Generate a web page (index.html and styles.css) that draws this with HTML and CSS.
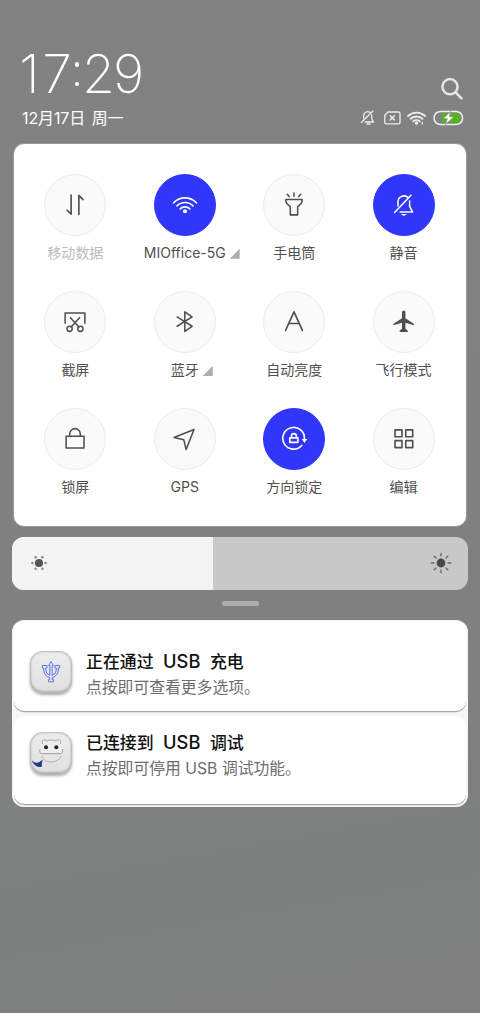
FILE: index.html
```html
<!DOCTYPE html>
<html lang="zh-CN">
<head>
<meta charset="utf-8">
<title>控制中心</title>
<link rel="stylesheet" href="styles.css">
</head>
<body>
<div class="shade">
  <header class="header">
    <div class="left">
      <div class="clock"><span class="n1">1</span><span class="n7">7</span><span class="colon"><i></i><i></i></span><span class="n2">2</span><span class="n9">9</span></div>
      <div class="date">12月17日 周一</div>
    </div>
    <div class="right">
      <svg class="search" width="24" height="24" viewBox="0 0 24 24"><circle cx="10" cy="9.7" r="7.6"/><path d="M15.5 15.3L21.5 21.3"/></svg>
      <svg class="status" width="106" height="18" viewBox="0 0 106 18">
        <g class="line">
          <path d="M2.5 13.2L14 2M4.6 9V7.2A4.2 4.2 0 0 1 11.2 3.4M12.8 6V10L14.6 13H6.2"/>
          <path d="M8 15H11"/>
          <path d="M29 3H39.4Q41 3 41 4.6V13.4Q41 14.8 39.4 14.8H27.2Q25.8 14.8 25.8 13.4V6.2Z"/>
          <path d="M31.2 6.8L35.4 11M35.4 6.8L31.2 11" stroke-width="1.6"/>
          <path d="M49 7A12.5 12.5 0 0 1 66 7M51.6 9.8A8.6 8.6 0 0 1 63.4 9.8M54.3 12.3A4.8 4.8 0 0 1 60.7 12.3" stroke-width="1.9"/>
        </g>
        <circle cx="57.5" cy="14" r="1.7" fill="#eee"/>
        <path d="M62 14.3L64 12.5V16Z" fill="#ddd"/>
        <rect x="75" y="2.5" width="28.6" height="13" rx="6.5" class="batt"/>
        <path d="M83 4.5H97A4.5 4.5 0 0 1 97 13.5H83Z" fill="#4fb812"/>
        <path d="M91.5 2.5L84 9.8H88.3L86.5 15.5L95 7.8H90.6Z" fill="#fff" stroke="#7d817b" stroke-width=".7"/>
      </svg>
    </div>
  </header>

  <main class="panel">
    <div class="tile off"><svg class="ico" viewBox="0 0 62 62"><path d="M27 20.7V40.5L22.8 36.4M35 40.7V21L39.2 25.4" stroke-width="1.7"/></svg><span class="label">移动数据</span></div>
    <div class="tile on"><svg class="ico" viewBox="0 0 62 62"><path d="M19.3 28.7A16 16 0 0 1 42.7 28.7M22.7 31.9A11.7 11.7 0 0 1 39.3 31.9M26 35A7 7 0 0 1 36 35" stroke-width="1.7"/><circle cx="31" cy="37.4" r="2.1" class="fill"/></svg><span class="label">MIOffice-5G<b class="corner"></b></span></div>
    <div class="tile"><svg class="ico" viewBox="0 0 62 62"><path d="M22.6 25.3H39.4V26.7C39.4 29.6 37 31.2 34.8 32.6V41.2H27.2V32.6C25 31.2 22.6 29.6 22.6 26.7ZM31 18.6V22M24 20L26 22.3M38 20L36 22.3"/></svg><span class="label">手电筒</span></div>
    <div class="tile on"><svg class="ico" viewBox="0 0 62 62"><path d="M38.2 21L21.3 38.8M24.8 32V28A6.2 6.2 0 0 1 34.6 22.8M36.8 26.8V32.5L39.9 38.3H27"/><path d="M28 40.3H33.8Q32.6 42 30.9 42T28 40.3Z" class="fill"/></svg><span class="label">静音</span></div>

    <div class="tile"><svg class="ico" viewBox="0 0 62 62"><path d="M20.8 32.2V21.8H41.2V32.2M26.3 26.5L35 36.1M35.7 26.5L27 36.1"/><circle cx="25.4" cy="38" r="2.7"/><circle cx="36.6" cy="38" r="2.7"/></svg><span class="label">截屏</span></div>
    <div class="tile"><svg class="ico" viewBox="0 0 62 62"><path d="M22.9 25.8L38.3 35.4L30.8 40.7V20.5L38.3 25.8L22.9 35.4"/></svg><span class="label">蓝牙<b class="corner"></b></span></div>
    <div class="tile"><svg class="ico" viewBox="0 0 62 62"><path d="M22.3 39.7L31 20.5L39.7 39.7M25.5 32.5H36.5" stroke-width="1.7"/></svg><span class="label">自动亮度</span></div>
    <div class="tile"><svg class="ico" viewBox="0 0 62 62"><path class="fill" d="M28.9 21Q28.9 19 30.7 19T32.5 21V27L41.2 32.7V34.3L32.5 31.7V38L34.9 40V41.3H26.5V40L28.9 38V31.7L20.2 34.3V32.7L28.9 27Z"/></svg><span class="label">飞行模式</span></div>

    <div class="tile"><svg class="ico" viewBox="0 0 62 62"><path d="M21.8 28.2H40.3V40.3H21.8ZM25.5 28V25.8A5.5 5.5 0 0 1 36.5 25.8V28"/></svg><span class="label">锁屏</span></div>
    <div class="tile"><svg class="ico" viewBox="0 0 62 62"><path d="M40.3 21.2L19.6 29.4L29.7 31.7L32.2 41.8Z"/></svg><span class="label">GPS</span></div>
    <div class="tile on"><svg class="ico" viewBox="0 0 62 62"><path d="M39 37.7A11.2 11.2 0 1 1 41.8 31M26.7 29.8H35V34.5H26.7ZM28.4 29.6V28A2.5 2.5 0 0 1 33.4 28V29.6" stroke-width="1.7"/><path class="fill" d="M39 31H44.6L41.8 35.2Z"/></svg><span class="label">方向锁定</span></div>
    <div class="tile"><svg class="ico" viewBox="0 0 62 62"><path d="M21.7 21.5H28.9V28.7H21.7ZM32.8 21.5H40V28.7H32.8ZM21.7 32.7H28.9V39.9H21.7ZM32.8 32.7H40V39.9H32.8Z" stroke-width="1.7"/></svg><span class="label">编辑</span></div>
  </main>

  <div class="slider">
    <div class="level"><svg width="18" height="18" viewBox="0 0 18 18" fill="#858585"><circle cx="9" cy="9" r="4.1" fill="#555"/><circle cx="2.4" cy="9" r="1.2"/><circle cx="15.6" cy="9" r="1.2"/><circle cx="5.6" cy="3.3" r="1.2"/><circle cx="12.4" cy="3.3" r="1.2"/><circle cx="5.6" cy="14.7" r="1.2"/><circle cx="12.4" cy="14.7" r="1.2"/></svg></div>
    <svg width="22" height="22" viewBox="0 0 22 22"><circle cx="11" cy="11" r="4.4" fill="#484848"/><path d="M11 1.3V4M11 18V20.7M1.3 11H4M18 11H20.7M4.2 4.2L6 6M16 16L17.8 17.8M17.8 4.2L16 6M6 16L4.2 17.8" stroke="#666" stroke-width="1.3" stroke-linecap="round"/></svg>
  </div>
  <div class="handle"></div>

  <section class="notes">
    <article class="note first">
      <div class="app"><svg width="20" height="24" viewBox="0 0 20 24"><g fill="none" stroke="#5266f0" stroke-width=".9"><path d="M10 1.5L7.7 5.5H8.8V15.3Q5.2 14.5 4.7 10V8H6V5.5H1.3V8H2.7V10Q3.2 16 8.8 17.6V19.5H7.6V21.8H12.4V19.5H11.2V17.6Q16.8 16 17.3 10V8H18.7V5.5H14V8H15.3V10Q14.8 14.5 11.2 15.3V5.5H12.3Z"/></g></svg></div>
      <div class="text"><h2>正在通过<em>USB</em>充电</h2><p>点按即可查看更多选项。</p></div>
    </article>
    <article class="note second">
      <div class="app"><svg width="42" height="42" viewBox="0 0 42 42" fill="none"><path d="M10 21Q9.5 15 12.5 12Q11 7.5 15.5 7.8L17.5 9.3H25L27.5 7.8Q32 7.5 30 12Q33 15 32.5 21Z" fill="#ededed"/><path d="M12.5 12Q11 7.5 15.5 7.8L17.5 9.3M25 9.3L27.5 7.8Q32 7.5 30 12M17.5 8.2H25" stroke="#a0a0a0" stroke-width=".9"/><path d="M10 17Q9 21.7 12 21.7H30Q33.5 21.7 32.5 17" stroke="#999" stroke-width=".9"/><path d="M12 24Q14 30 21.3 30T31 24" stroke="#aaa" stroke-width=".9"/><circle cx="16" cy="15.2" r="2" fill="#222"/><circle cx="26.3" cy="15.2" r="2" fill="#222"/><path d="M2 28.5Q5 31.5 7.5 30.7L9.5 30L12.8 27.5L11.8 31.5L12 34.5Q8.5 36 5.5 33.5Q3 31.8 2 28.5Z" fill="#213d7d"/></svg></div>
      <div class="text"><h2>已连接到<em>USB</em>调试</h2><p>点按即可停用 USB 调试功能。</p></div>
    </article>
  </section>
</div>
</body>
</html>
```
FILE: styles.css
```css
* { box-sizing: border-box; }
body {
  margin: 0;
  background: #808080;
  font-family: Inter, "Noto Sans CJK SC", sans-serif;
}
.shade {
  width: 480px;
  height: 1013px;
  overflow: hidden;
  padding: 44px 12px 0;
  display: flex;
  flex-direction: column;
  background: linear-gradient(170deg, #828282, #808080 60%, #7e8080 85%, #808080);
}
.header {
  height: 100px;
  flex: none;
  display: flex;
  justify-content: space-between;
  padding: 0 3px 0 10px;
  color: #fff;
}
.clock {
  display: flex;
  height: 60px;
  margin-left: -5px;
  font-weight: 250;
  font-size: 53.5px;
  line-height: 60px;
}
.n1, .n7, .n2, .n9 { display: flex; justify-content: center; }
.n1 { width: 25px; }
.n7 { width: 30px; }
.n2 { width: 33px; }
.n9 { width: 27px; }
.colon {
  width: 10px;
  display: flex;
  flex-direction: column;
  align-items: center;
  gap: 15px;
  padding-top: 18px;
}
.colon i { width: 4.5px; height: 4.5px; border-radius: 50%; background: #fff; }
.date {
  margin-top: 3px;
  font-size: 16px;
  line-height: 22px;
  letter-spacing: -0.1px;
  word-spacing: 2px;
  white-space: nowrap;
}
.right {
  display: flex;
  flex-direction: column;
  align-items: flex-end;
  padding-top: 32.5px;
}
.search { margin-right: 1px; fill: none; stroke: #e6e6e6; stroke-width: 2.5; stroke-linecap: round; }
.status { margin-top: 8px; }
.line { fill: none; stroke: #eee; stroke-width: 1.3; stroke-linecap: round; stroke-linejoin: round; }
.batt { fill: none; stroke: #f0f0f0; stroke-width: 1.5; }

.panel {
  flex: none;
  height: 381.5px;
  margin: 0 2px;
  padding: 29.5px 0 0 6.7px;
  display: grid;
  grid-template-columns: repeat(4, 109.4px);
  grid-auto-rows: 117.3px;
  background: #fff;
  border-radius: 10px;
  box-shadow: 0 0 0 1px #9b9b9b;
}
.tile { display: flex; flex-direction: column; align-items: center; }
.ico {
  width: 62px;
  height: 62px;
  border-radius: 50%;
  background: #fafafa;
  border: 1px solid #ececec;
  fill: none;
  stroke: #4d4f51;
  color: #4d4f51;
  stroke-width: 1.6;
  stroke-linejoin: round;
  stroke-linecap: round;
}
.on .ico { background: #3037fb; border-color: #3037fb; stroke: #fff; color: #fff; }
.fill { fill: currentColor; stroke: none; }
.label {
  position: relative;
  margin-top: 7.3px;
  font-size: 14px;
  line-height: 20px;
  color: #505050;
  white-space: nowrap;
}
.off .label { color: #bcbcbc; }
.corner {
  position: absolute;
  left: calc(100% + 4px);
  bottom: 4px;
  width: 10px;
  height: 10px;
  background: #adadad;
  clip-path: polygon(100% 0, 100% 100%, 0 100%);
}
.slider {
  flex: none;
  height: 53px;
  margin-top: 11px;
  border-radius: 12px;
  background: #c8c8c8;
  display: flex;
  align-items: center;
  justify-content: space-between;
  padding-right: 16px;
  overflow: hidden;
}
.level {
  width: 201.3px;
  height: 100%;
  background: #f3f3f3;
  display: flex;
  align-items: center;
  padding-left: 18px;
}
.handle {
  flex: none;
  width: 37px;
  height: 5.5px;
  border-radius: 3px;
  background: #aeaeae;
  margin: 11px auto 0;
}
.notes {
  flex: none;
  height: 187px;
  margin-top: 13.5px;
  padding: 1px 2px 3px;
  border-radius: 12px;
  background: #f6f6f6;
  display: flex;
  flex-direction: column;
  gap: 5px;
}
.note { display: flex; background: #fff; border-radius: 10px; box-shadow: 0 1.2px 0.5px #a6a6a6; padding-left: 16px; }
.first { height: 90px; padding-top: 30px; }
.second { height: 88px; padding-top: 16px; }
.app {
  width: 42px;
  height: 42px;
  border-radius: 13px;
  background: linear-gradient(#ececec, #e0e0e0);
  box-shadow: inset 0 0 2px 1px #b5b5b5, inset 0 -2px 2px #b4b4b4, 0 2px 3px #aaa;
  display: flex;
  align-items: center;
  justify-content: center;
}
.text { margin-left: 14px; }
.text h2 { margin: -2px 0 0; font-size: 16.9px; line-height: 24px; font-weight: 500; color: #111; white-space: nowrap; }
.text em { font-style: normal; font-weight: 450; margin: 0 9.5px; font-size: 18.3px; }
.text p { margin: 2px 0 0; font-size: 15.8px; line-height: 24px; color: #6c6c6c; }
```
